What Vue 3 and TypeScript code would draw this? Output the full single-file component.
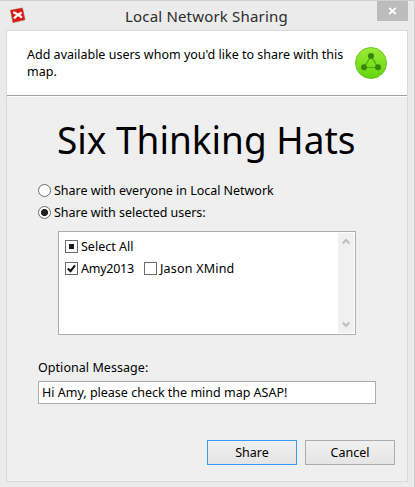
<script setup lang="ts">
import { ref } from 'vue'

type Scope = 'everyone' | 'selected'

interface User {
  name: string
  checked: boolean
}

const mapTitle = 'Six Thinking Hats'
const scope = ref<Scope>('selected')
const users = ref<User[]>([
  { name: 'Amy2013', checked: true },
  { name: 'Jason XMind', checked: false },
])
const message = ref('Hi Amy, please check the mind map ASAP!')

function toggle(user: User): void {
  user.checked = !user.checked
}
</script>

<template>
  <div class="window">
    <header class="titlebar">
      <svg class="logo" viewBox="0 0 17 17">
        <path d="M1.4 3.2 13.4 1 16 12.8 4 15.6Z" fill="#dd1712" stroke="#a94a42" stroke-width=".6" />
        <path d="M4.2 5.4C6.5 5.8 10.4 8.6 12.9 10.7M12.6 5.4C10.2 6.7 7.2 8.9 4.9 11.4" fill="none" stroke="#fff" stroke-width="2.3" />
      </svg>
      <h1 class="caption">Local Network Sharing</h1>
      <button class="close" aria-label="Close">
        <svg viewBox="0 0 9 8"><path d="M1.2 .8 7.8 7.2M7.8 .8 1.2 7.2" stroke="#fff" stroke-width="1.8" /></svg>
      </button>
    </header>

    <main class="frame">
      <section class="banner">
        <p class="intro">Add available users whom you'd like to share with this map.</p>
        <svg class="share-icon" viewBox="0 0 32 32">
          <defs>
            <linearGradient id="green" x1="0" y1="0" x2="0" y2="1">
              <stop offset="0" stop-color="#9cec38" />
              <stop offset="1" stop-color="#62d60c" />
            </linearGradient>
          </defs>
          <circle cx="16" cy="16" r="15.5" fill="url(#green)" stroke="#6cc52c" />
          <path d="M16 9 9 20.5H23Z" fill="none" stroke="#4eab12" stroke-width="1.2" />
          <g fill="#37850b">
            <circle cx="16" cy="9" r="3" />
            <circle cx="9" cy="20.3" r="3" />
            <circle cx="23" cy="20.3" r="3" />
          </g>
        </svg>
      </section>

      <section class="body">
        <h2 class="map-title">{{ mapTitle }}</h2>

        <div class="option" @click="scope = 'everyone'">
          <span class="radio" :class="{ on: scope === 'everyone' }"></span>
          <span>Share with everyone in Local Network</span>
        </div>
        <div class="option" @click="scope = 'selected'">
          <span class="radio" :class="{ on: scope === 'selected' }"></span>
          <span>Share with selected users:</span>
        </div>

        <div class="list">
          <div class="rows">
            <div class="row">
              <div class="item">
                <span class="box"><i class="partial"></i></span>
                <span>Select All</span>
              </div>
            </div>
            <div class="row">
              <div v-for="user in users" :key="user.name" class="item user" @click="toggle(user)">
                <span class="box">
                  <svg v-if="user.checked" viewBox="0 0 11 11"><path d="M1.8 5.5 4.5 8.1 9 2.3" fill="none" stroke="#111" stroke-width="2.1" /></svg>
                </span>
                <span class="name">{{ user.name }}</span>
              </div>
            </div>
          </div>
          <div class="scrollbar">
            <svg viewBox="0 0 8 7"><path d="M.7 5.5 4 2 7.3 5.5" /></svg>
            <svg viewBox="0 0 8 7"><path d="M.7 1.5 4 5 7.3 1.5" /></svg>
          </div>
        </div>

        <div class="label">Optional Message:</div>
        <div class="field">{{ message }}</div>

        <footer class="actions">
          <button class="btn primary">Share</button>
          <button class="btn">Cancel</button>
        </footer>
      </section>
    </main>
  </div>
</template>

<style>
body {
  margin: 0;
}
</style>

<style scoped>
* {
  box-sizing: border-box;
}
.window {
  width: 415px;
  height: 487px;
  padding: 0 7px 5px 6px;
  overflow: hidden;
  background: #ebebeb;
  border-top: 1px solid #cfcfcf;
  border-right: 1px solid #d2d2d2;
  font: 12.5px/17px "Noto Sans", "Open Sans", sans-serif;
  color: #000;
}
.titlebar {
  display: flex;
  height: 29px;
  align-items: flex-start;
}
.logo {
  width: 17px;
  height: 17px;
  margin: 6px 0 0 3px;
}
.caption {
  flex: 1;
  margin: 5px 0 0 99px;
  font-size: 15px;
  line-height: 20px;
  font-weight: 400;
  letter-spacing: 0.18px;
  color: #2b2b2b;
  white-space: nowrap;
}
.close {
  display: flex;
  width: 31px;
  height: 20px;
  margin-right: -1px;
  padding: 0;
  align-items: center;
  justify-content: center;
  border: 0;
  background: #bcbcbc;
}
.close svg {
  width: 9px;
  height: 8px;
}
.frame {
  width: 402px;
  height: 452px;
  border: 1px solid #d9d9d9;
  background: #efefef;
}
.banner {
  display: flex;
  height: 66px;
  align-items: flex-start;
  background: linear-gradient(#fff 64px, #a0a0a0 64px, #a0a0a0 65px, #fff 65px);
}
.intro {
  width: 324px;
  margin: 15px 4px 0 20px;
}
.share-icon {
  width: 32px;
  height: 32px;
  margin-top: 16px;
}
.body {
  padding: 0 0 0 31px;
}
.map-title {
  margin: 14px 0 13px 19px;
  font-size: 39px;
  line-height: 56px;
  font-weight: 400;
  white-space: nowrap;
  transform: scaleX(0.948);
  transform-origin: 0 0;
}
.option {
  display: flex;
  height: 22px;
  padding-bottom: 1px;
  align-items: center;
  gap: 3px;
  letter-spacing: -0.03px;
  white-space: nowrap;
}
.radio {
  width: 13px;
  height: 13px;
  border: 1px solid #6b6b6b;
  border-radius: 50%;
  background: #fff;
}
.radio.on {
  background: radial-gradient(circle, #222 3.2px, #fff 3.9px);
}
.list {
  display: flex;
  width: 298px;
  height: 104px;
  margin: 7px 0 0 20px;
  padding: 1px;
  justify-content: space-between;
  border: 1px solid #abadb3;
  background: #fff;
}
.rows {
  padding: 2px 0 0 5px;
}
.row {
  display: flex;
  height: 22px;
  padding-top: 1px;
  align-items: center;
}
.item {
  display: flex;
  align-items: center;
  gap: 3px;
  white-space: nowrap;
}
.user {
  min-width: 79px;
}
.user:first-child .name {
  letter-spacing: -0.25px;
}
.user:last-child .name {
  letter-spacing: 0.2px;
}
.box {
  display: flex;
  width: 13px;
  height: 13px;
  align-items: center;
  justify-content: center;
  border: 1px solid #6b6b6b;
  background: #fff;
}
.box svg {
  width: 11px;
  height: 11px;
}
.partial {
  width: 5px;
  height: 5px;
  background: #1c1c1c;
}
.scrollbar {
  display: flex;
  width: 16px;
  flex-direction: column;
  align-items: center;
  justify-content: space-between;
  padding: 5px 0;
  background: #f0f0f0;
}
.scrollbar svg {
  width: 8px;
  height: 7px;
  margin-right: 1px;
  fill: none;
  stroke: #bfbfbf;
  stroke-width: 2;
}
.label {
  margin-top: 24px;
  line-height: 18px;
  letter-spacing: 0.05px;
}
.field {
  width: 338px;
  height: 23px;
  margin-top: 4px;
  padding: 0 3px;
  border: 1px solid #abadb3;
  background: #fff;
  line-height: 21px;
  white-space: nowrap;
}
.actions {
  display: flex;
  margin: 36px 0 0 169px;
  gap: 8px;
}
.btn {
  width: 90px;
  height: 25px;
  padding: 0;
  border: 1px solid #acacac;
  background: linear-gradient(#f0f0f0, #e5e5e5);
  font: inherit;
  color: #000;
}
.btn.primary {
  border-color: #3399ff;
}
</style>
